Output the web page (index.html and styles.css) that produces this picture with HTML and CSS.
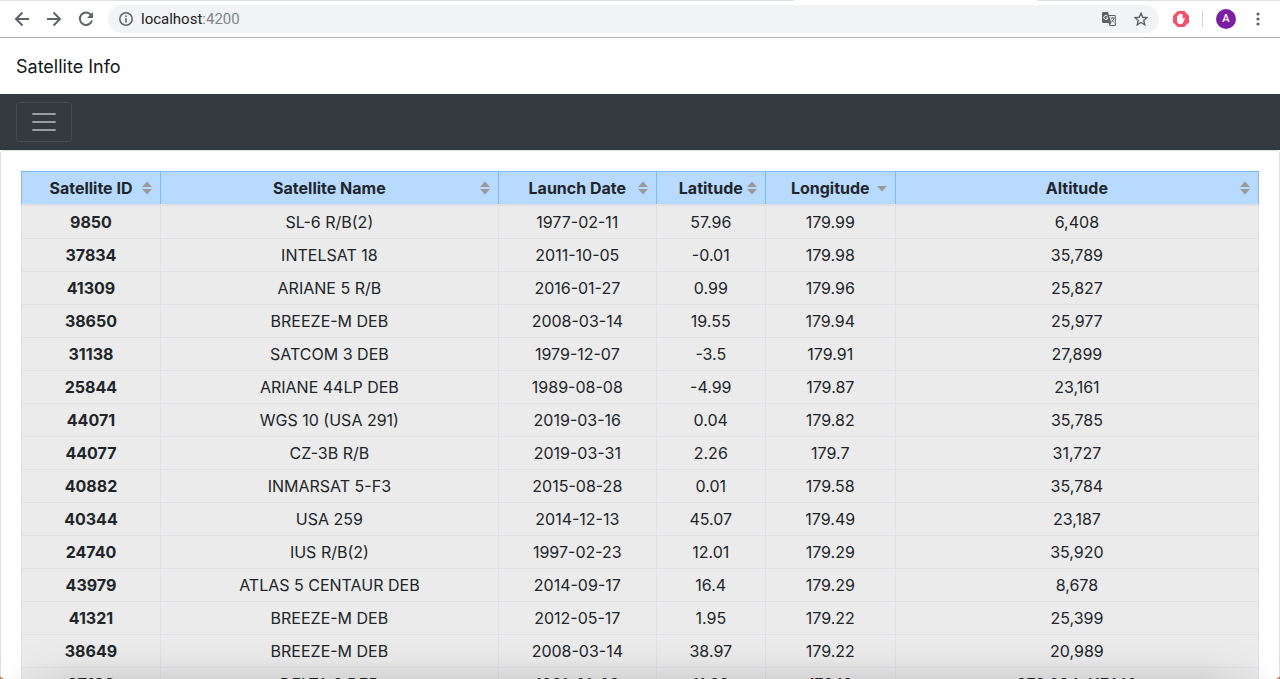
FILE: index.html
```html
<!DOCTYPE html>
<html lang="en">
<head>
<meta charset="utf-8">
<meta name="viewport" content="width=device-width, initial-scale=1">
<title>Satellite Info</title>
<link rel="stylesheet" href="styles.css">
</head>
<body>
<div class="window">
  <div class="tab-edge"><span class="tab-rest tab-left"></span><span class="tab-rest tab-right"></span></div>
  <div class="toolbar">
    <button class="tool" type="button" aria-label="Back"><svg width="16" height="16" viewBox="0 0 16 16"><path d="M15 8H2.500M8.500 1.500L2 8l6.500 6.500" fill="none" stroke="#5f6368" stroke-width="2"/></svg></button>
    <button class="tool" type="button" aria-label="Forward"><svg width="16" height="16" viewBox="0 0 16 16"><path d="M1 8h12.500M7.500 1.500L14 8l-6.500 6.500" fill="none" stroke="#5f6368" stroke-width="2"/></svg></button>
    <button class="tool" type="button" aria-label="Reload"><svg width="16" height="16" viewBox="0 0 16 16"><path d="M13.200 4.200A6.200 6.200 0 1 0 14 9.500" fill="none" stroke="#5f6368" stroke-width="2"/><path d="M15 1v6H9z" fill="#5f6368"/></svg></button>
    <div class="omnibox">
      <button class="tool" type="button" aria-label="Site information"><svg width="14" height="14" viewBox="0 0 14 14"><circle cx="7" cy="7" r="6.200" fill="none" stroke="#5f6368" stroke-width="1.500"/><path d="M7 6.200v4.300M7 3.500v1.500" stroke="#5f6368" stroke-width="1.600"/></svg></button>
      <a class="url" href="#">localhost<span class="port">:4200</span></a>
      <button class="tool" type="button" aria-label="Translate"><svg width="14" height="14" viewBox="0 0 14 14"><path d="M7 3.500h6.300v10H7.500" fill="#f1f3f4" stroke="#5f6368"/><path d="M0 1.200Q0 0 1.200 0H6l3.300 11H1.200Q0 11 0 9.800z" fill="#5f6368"/><path d="M6.500 11h2.700l-1.500 2.500z" fill="#5f6368"/><path d="M5.700 4.300A2.100 2.100 0 1 0 6 6H4" fill="none" stroke="#f1f3f4" stroke-width="1"/><path d="M8.500 6h4M10.500 5v1M12 6q-.5 2.500-2.800 4M9.500 7.500l2.500 3" fill="none" stroke="#5f6368" stroke-width=".9"/></svg></button>
      <button class="tool" type="button" aria-label="Bookmark this page"><svg width="14" height="14" viewBox="0 0 14 14"><path d="M7 1.300l1.700 4 4.400.4-3.400 2.800 1.100 4.300L7 10.500l-3.800 2.300 1.100-4.300L.9 5.700l4.400-.4z" fill="none" stroke="#5f6368" stroke-width="1.400"/></svg></button>
    </div>
    <div class="extensions">
      <button class="tool" type="button" aria-label="Content blocker"><svg width="16" height="16" viewBox="0 0 16 16"><path d="M4.700 0h6.600L16 4.700v6.600L11.300 16H4.700L0 11.300V4.700z" fill="#f5506a"/><path d="M4 7.500V5.200q.6-.7 1.200 0V3.600q.7-.8 1.400 0V3q.8-.9 1.600 0v.5q.8-.8 1.500 0v4.700l1-1.200q.9-.5 1.200.3L10.500 11Q9.500 13.200 7.500 13.200 4 13 4 9.500z" fill="#fff"/></svg></button>
      <span class="divider"></span>
      <button class="avatar" type="button" aria-label="Profile A">A</button>
      <button class="tool" type="button" aria-label="Menu"><svg width="4" height="14" viewBox="0 0 4 14"><g fill="#5f6368"><circle cx="2" cy="2" r="1.600"/><circle cx="2" cy="7" r="1.600"/><circle cx="2" cy="12" r="1.600"/></g></svg></button>
    </div>
  </div>

  <header class="brand">Satellite Info</header>
  <nav class="navbar">
    <button class="toggler" type="button" aria-label="Toggle navigation"><svg width="30" height="30" viewBox="0 0 30 30"><path d="M4 7h22M4 15h22M4 23h22" stroke="#999ca0" stroke-width="2" stroke-linecap="round"/></svg></button>
  </nav>

  <main class="card">
    <table class="satellites">
      <colgroup><col class="c-id"><col class="c-name"><col class="c-date"><col class="c-lat"><col class="c-lon"><col></colgroup>
      <thead>
        <tr>
          <th scope="col"><button class="sort" type="button">Satellite ID<svg class="arrows" width="12" height="14" viewBox="0 0 12 14"><path d="M1 6l5-5.500L11 6zM1 8h10l-5 5.500z"/></svg></button></th>
          <th scope="col"><button class="sort" type="button">Satellite Name<svg class="arrows" width="12" height="14" viewBox="0 0 12 14"><path d="M1 6l5-5.500L11 6zM1 8h10l-5 5.500z"/></svg></button></th>
          <th scope="col"><button class="sort" type="button">Launch Date<svg class="arrows" width="12" height="14" viewBox="0 0 12 14"><path d="M1 6l5-5.500L11 6zM1 8h10l-5 5.500z"/></svg></button></th>
          <th scope="col"><button class="sort" type="button">Latitude<svg class="arrows" width="12" height="14" viewBox="0 0 12 14"><path d="M1 6l5-5.500L11 6zM1 8h10l-5 5.500z"/></svg></button></th>
          <th scope="col" aria-sort="descending"><button class="sort" type="button">Longitude<svg class="arrows" width="12" height="14" viewBox="0 0 12 14"><path d="M1 5h10l-5 5.500z"/></svg></button></th>
          <th scope="col"><button class="sort" type="button">Altitude<svg class="arrows" width="12" height="14" viewBox="0 0 12 14"><path d="M1 6l5-5.500L11 6zM1 8h10l-5 5.500z"/></svg></button></th>
        </tr>
      </thead>
      <tbody>
        <tr><th scope="row">9850</th><td>SL-6 R/B(2)</td><td>1977-02-11</td><td>57.96</td><td>179.99</td><td>6,408</td></tr>
        <tr><th scope="row">37834</th><td>INTELSAT 18</td><td>2011-10-05</td><td>-0.01</td><td>179.98</td><td>35,789</td></tr>
        <tr><th scope="row">41309</th><td>ARIANE 5 R/B</td><td>2016-01-27</td><td>0.99</td><td>179.96</td><td>25,827</td></tr>
        <tr><th scope="row">38650</th><td>BREEZE-M DEB</td><td>2008-03-14</td><td>19.55</td><td>179.94</td><td>25,977</td></tr>
        <tr><th scope="row">31138</th><td>SATCOM 3 DEB</td><td>1979-12-07</td><td>-3.5</td><td>179.91</td><td>27,899</td></tr>
        <tr><th scope="row">25844</th><td>ARIANE 44LP DEB</td><td>1989-08-08</td><td>-4.99</td><td>179.87</td><td>23,161</td></tr>
        <tr><th scope="row">44071</th><td>WGS 10 (USA 291)</td><td>2019-03-16</td><td>0.04</td><td>179.82</td><td>35,785</td></tr>
        <tr><th scope="row">44077</th><td>CZ-3B R/B</td><td>2019-03-31</td><td>2.26</td><td>179.7</td><td>31,727</td></tr>
        <tr><th scope="row">40882</th><td>INMARSAT 5-F3</td><td>2015-08-28</td><td>0.01</td><td>179.58</td><td>35,784</td></tr>
        <tr><th scope="row">40344</th><td>USA 259</td><td>2014-12-13</td><td>45.07</td><td>179.49</td><td>23,187</td></tr>
        <tr><th scope="row">24740</th><td>IUS R/B(2)</td><td>1997-02-23</td><td>12.01</td><td>179.29</td><td>35,920</td></tr>
        <tr><th scope="row">43979</th><td>ATLAS 5 CENTAUR DEB</td><td>2014-09-17</td><td>16.4</td><td>179.29</td><td>8,678</td></tr>
        <tr><th scope="row">41321</th><td>BREEZE-M DEB</td><td>2012-05-17</td><td>1.95</td><td>179.22</td><td>25,399</td></tr>
        <tr><th scope="row">38649</th><td>BREEZE-M DEB</td><td>2008-03-14</td><td>38.97</td><td>179.22</td><td>20,989</td></tr>
        <tr><th scope="row">37138</th><td>DELTA 2 DEB</td><td>1981-01-03</td><td>11.38</td><td>179.19</td><td>373,034,417,140</td></tr>
      </tbody>
    </table>
  </main>
  <div class="bottom-shade"></div>
</div>
</body>
</html>
```

FILE: styles.css
```css
* { box-sizing: border-box; }

body {
  margin: 0;
  background: #a98562;
  color: #212529;
  font-family: Inter, Roboto, "Liberation Sans", sans-serif;
  font-size: 16px;
  line-height: 24px;
}

button {
  padding: 0;
  border: 0;
  background: none;
  color: inherit;
  font: inherit;
}

.window {
  position: relative;
  display: flex;
  flex-direction: column;
  height: 100vh;
  overflow: hidden;
  background: #fff;
  border-radius: 0 0 5px 5px;
}

.tab-edge { display: flex; justify-content: space-between; flex: none; height: 1px; }
.tab-rest { background: #dee1e6; }
.tab-left { width: 62%; }
.tab-right { width: 19%; }

.toolbar {
  display: flex;
  align-items: center;
  flex: none;
  gap: 16px;
  height: 37px;
  padding: 0 20px 0 14px;
  border-bottom: 1px solid #b3b3b3;
}

.tool { display: flex; flex: none; }

.omnibox {
  display: flex;
  align-items: center;
  flex: 1;
  gap: 18px;
  height: 28px;
  margin-left: -2px;
  padding: 0 11px;
  border-radius: 14px;
  background: #f1f3f4;
}

.url {
  flex: 1;
  margin-left: -10px;
  color: #202124;
  font-family: Roboto, sans-serif;
  font-size: 15px;
  text-decoration: none;
}
.port { color: #80868b; }

.extensions { display: flex; align-items: center; gap: 13px; margin-left: -2px; }
.divider { width: 1px; height: 16px; background: #cfd1d4; }
.avatar {
  width: 20px;
  height: 20px;
  margin-right: 7px;
  border-radius: 50%;
  background: #7b1fa2;
  color: #fff;
  font-family: Roboto, sans-serif;
  font-size: 11px;
  font-weight: 500;
  line-height: 20px;
}

.brand { flex: none; padding: 17px 16px 15px; color: #141619; font-size: 18px; }

.navbar { flex: none; padding: 8px 16px; background: #343a40; }
.toggler {
  display: flex;
  padding: 4px 12px;
  border: 1px solid #484c50;
  border-radius: 4px;
}

.card {
  flex: none;
  padding: 20px;
  border: 1px solid #dfdfdf;
  border-radius: 4px;
}

.satellites {
  width: 100%;
  border-collapse: collapse;
  table-layout: fixed;
  text-align: center;
}
.c-id { width: 11.230%; }
.c-name { width: 27.320%; }
.c-date { width: 12.770%; }
.c-lat { width: 8.810%; }
.c-lon { width: 10.510%; }

.satellites th, .satellites td {
  padding: 4px;
  border: 1px solid #dee2e6;
}
.satellites tbody { background: #ebebeb; }
.satellites thead { background: #b8daff; }
.satellites thead th {
  border-color: #7abaff;
  border-bottom: 2px solid #dee2e6;
}

.sort { position: relative; width: 100%; white-space: nowrap; }
.arrows { position: absolute; top: 5px; right: 3px; fill: #999; }

.bottom-shade {
  position: absolute;
  right: 0;
  bottom: 0;
  left: 0;
  height: 40px;
  background: linear-gradient(to bottom, transparent, rgba(0, 0, 0, .02) 50%, rgba(0, 0, 0, .09));
  mask-image: linear-gradient(to right, transparent, #000 6%, #000 94%, transparent);
  pointer-events: none;
}
```
